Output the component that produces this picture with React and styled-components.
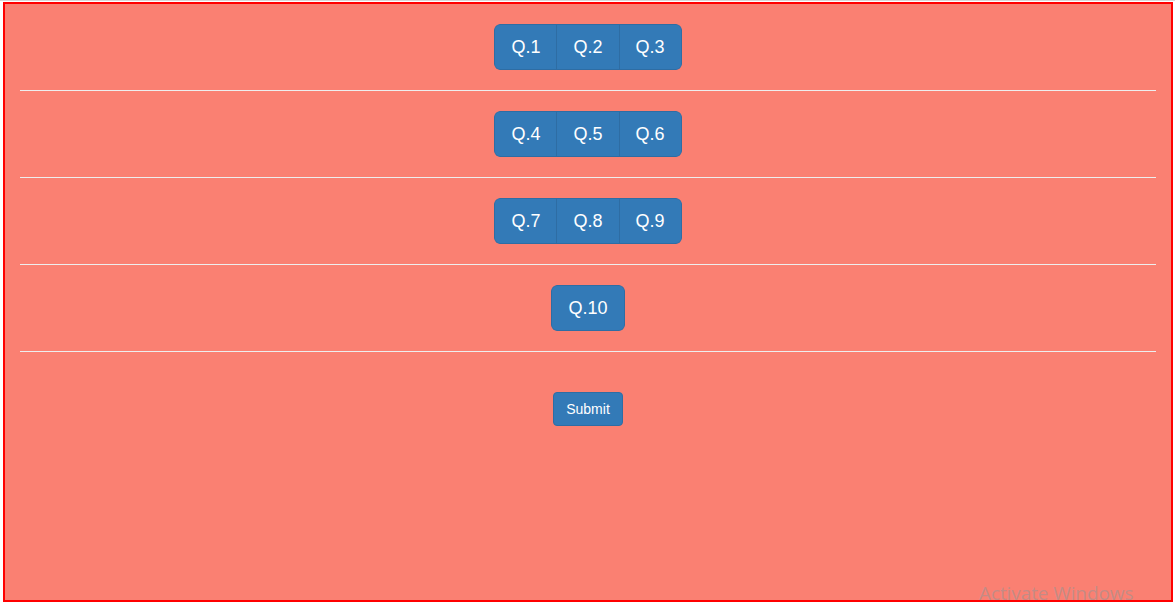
import React from 'react'
import styled, {createGlobalStyle} from 'styled-components'

const GlobalStyle=createGlobalStyle`
html,body{
  margin:0;
  padding:0;
  background:#fff;
  font-family:"Liberation Sans",Arial,sans-serif;
}
*{box-sizing:border-box;}
`

const rows=[
  ['Q.1','Q.2','Q.3'],
  ['Q.4','Q.5','Q.6'],
  ['Q.7','Q.8','Q.9'],
  ['Q.10'],
]

function App() {
  return (
    <>
      <GlobalStyle/>
      <TopRule/>
      <Frame>
        <Container>
          {rows.map((row,i)=>(
            <React.Fragment key={i}>
              <Row>
                <Group>
                  {row.map((q)=>(
                    <QButton key={q}>{q}</QButton>
                  ))}
                </Group>
              </Row>
              <Divider/>
            </React.Fragment>
          ))}
          <SubmitRow>
            <Submit type="button">Submit</Submit>
          </SubmitRow>
        </Container>
        <Watermark>Activate Windows</Watermark>
      </Frame>
    </>
  )
}

const TopRule=styled.div`
height:1px;
background:#d8d8d8;
`
const Frame=styled.div`
position:relative;
margin:1px 2px 3px 3px;
height:600px;
border:2px solid #ff0000;
background:#fa8072;
overflow:hidden;
`
const Container=styled.div`
padding:20px 15px 0;
`
const Row=styled.div`
display:flex;
justify-content:center;
`
const Group=styled.div`
display:inline-flex;
border-radius:6px;
overflow:hidden;
`
const QButton=styled.button`
font-family:"Liberation Sans",Arial,sans-serif;
font-size:18px;
line-height:24px;
padding:10px 16px;
height:46px;
color:#fff;
background:#337ab7;
border:1px solid #2e6da4;
margin-left:-1px;
cursor:pointer;
&:first-child{
  margin-left:0;
  border-radius:6px 0 0 6px;
}
&:last-child{
  border-radius:0 6px 6px 0;
}
&:only-child{
  border-radius:6px;
}
`
const Divider=styled.hr`
margin:20px 0;
border:0;
border-top:1px solid #eee;
`
const SubmitRow=styled.div`
display:flex;
justify-content:center;
padding-top:20px;
`
const Submit=styled.button`
font-family:"Liberation Sans",Arial,sans-serif;
font-size:14px;
line-height:20px;
padding:6px 12px;
height:34px;
color:#fff;
background:#337ab7;
border:1px solid #2e6da4;
border-radius:4px;
cursor:pointer;
`
const Watermark=styled.div`
position:absolute;
left:974px;
top:576px;
font-family:"Open Sans","Noto Sans",sans-serif;
font-size:19px;
letter-spacing:-0.1px;
color:rgba(150,150,150,0.55);
white-space:nowrap;
pointer-events:none;
`

export default App
